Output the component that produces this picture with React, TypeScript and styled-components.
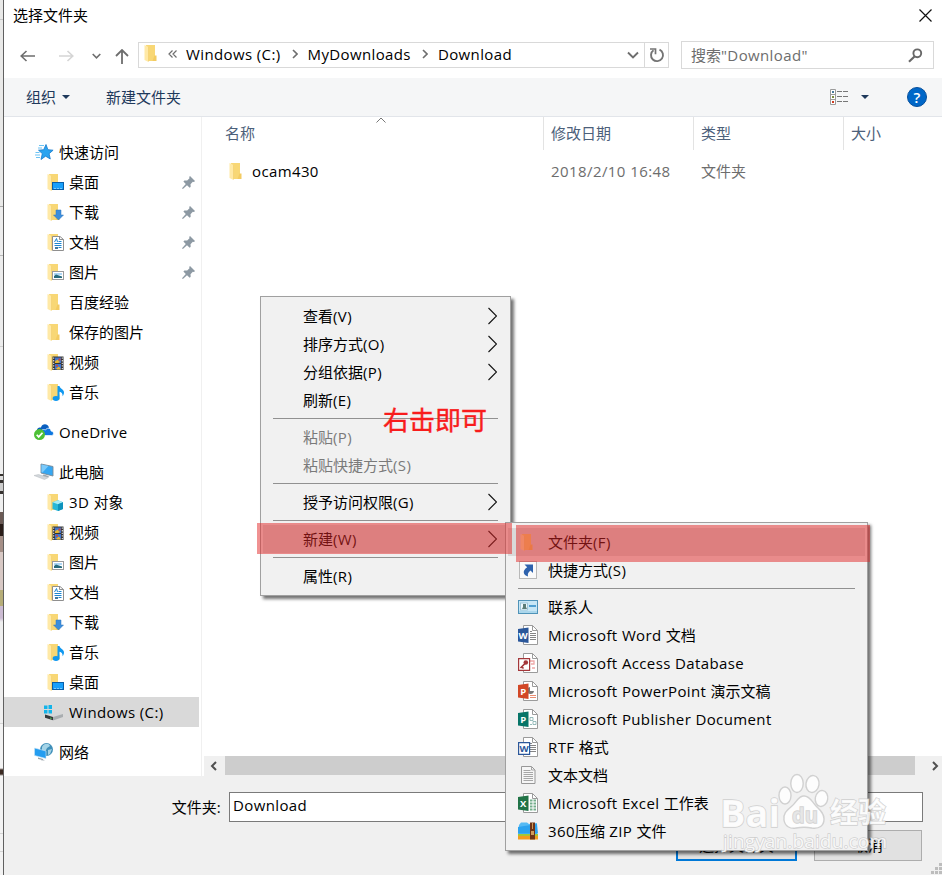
import React from "react";
import styled, { createGlobalStyle, css } from "styled-components";

const Global = createGlobalStyle`
  *, *::before, *::after { box-sizing: border-box; }
  html, body { margin: 0; padding: 0; overflow: hidden; background: #fff; }
  body {
    font-family: "Open Sans", "Noto Sans CJK SC", sans-serif;
    font-size: 15px;
    line-height: 20px;
    color: #000;
  }
  svg { display: block; flex: none; }
`;

const Latin = styled.span<{ $track?: number }>`
  letter-spacing: ${(p) => p.$track ?? 0.38}px;
  white-space: pre;
`;

/* Tracks the western runs of a mixed label, leaving the Chinese at its own pitch. */
const Label = ({ text, track }: { text: string; track?: number }) => (
  <span>
    {text.split(/([\x20-\x7e«]+)/).map((part, i) =>
      i % 2 ? (
        <Latin key={i} $track={track}>
          {part}
        </Latin>
      ) : (
        part
      )
    )}
  </span>
);

/* ---------- Icons ---------- */

const FolderShape = () => (
  <>
    <path d="M3 1h9v16H5z" fill="#f8d775" />
    <path d="M11.500 11.500h2v5.500h-4z" fill="#f3cb62" />
    <path d="M1.500 1l4 2v15l-4-2z" fill="#ffe9a6" />
    <path d="M5.500 3v14.500" stroke="#f0cb6c" strokeWidth=".6" />
  </>
);

type Kind =
  | "folder" | "desktop" | "down" | "doc" | "pic" | "video" | "music" | "cube";

const FilmShape = () => (
  <>
    <path d="M6.500 3.500h11v13.500h-11z" fill="#343436" />
    <path d="M9 4.500h6V10H9zM9 11h6v5.500H9z" fill="#3f74d0" />
    <path d="M9 8.500l2.500-2L14 9l-2 1H9zM10 15.500l3-2 2 3h-4z" fill="#e6b52e" />
    <path d="M12.500 5.500h2v2h-2zM10 12h2v1.500h-2z" fill="#d9462e" />
    <path d="M7.700 4.500V17M16.300 4.500V17" stroke="#e8e8e8" strokeWidth="1.100" strokeDasharray="1.300 1.300" />
  </>
);

const FolderIcon = ({ kind = "folder" }: { kind?: Kind }) => (
  <svg width="19" height="19" viewBox="0 0 19 19">
    <FolderShape />
    {kind === "desktop" && (
      <>
        <rect x="6.500" y="9.500" width="11" height="7" fill="#18a0fb" stroke="#0a5fa8" />
        <path d="M8.500 15.500h8" stroke="#d8f0ff" strokeWidth="1" strokeDasharray="1 2" />
      </>
    )}
    {kind === "down" && <path d="M10 7h5v5h2.500l-5 5-5-5H10z" fill="#3c8ddb" stroke="#2f74bd" strokeWidth=".5" />}
    {kind === "doc" && (
      <>
        <path d="M6.500 3.500h7.500l3.500 3v11h-11z" fill="#fff" stroke="#8f8f8f" />
        <path d="M13.500 3.500v3h4" fill="none" stroke="#8f8f8f" />
        <path d="M8.500 9l2-3.500 1 3.500M12.500 8.500h3M8.500 10.500h7M8.500 12.500h7M12.500 14.500h3" stroke="#1c86d1" fill="none" strokeWidth="1" />
        <path d="M9 14h3v2H9z" fill="#3e78a0" />
      </>
    )}
    {kind === "pic" && (
      <>
        <rect x="6.500" y="8.500" width="11" height="8" fill="#fff" stroke="#9a9a9a" />
        <path d="M8 10h8v2H8z" fill="#aed6f5" />
        <path d="M8 13l2-1.500 6 2V15H8z" fill="#276b7d" />
      </>
    )}
    {kind === "video" && <FilmShape />}
    {kind === "music" && (
      <>
        <ellipse cx="10" cy="15.500" rx="3.300" ry="2.400" fill="#1098f0" />
        <path d="M11.500 3h2c.5 3 4.500 3 4.500 6.500 0 1.500-.6 2.800-1.500 3.800.5-2.500-.9-4-3-4.600v7h-2z" fill="#1098f0" />
      </>
    )}
    {kind === "cube" && (
      <>
        <path d="M6.500 9.200l5.500-2 5 2V16l-5 2-5.500-2z" fill="#28b8d8" />
        <path d="M6.500 9.200l5.500-2 5 2-5 2z" fill="#a8ecf5" />
        <path d="M12 11.200l5-2V16l-5 2z" fill="#0e93bd" />
      </>
    )}
  </svg>
);

const StarIcon = () => (
  <svg width="20" height="19" viewBox="0 0 20 19">
    <path d="M12 1.500l1.900 5.200 5.200.5-4 3.500 1.200 5.300-4.700-2.800L7 16.500l1.300-5.900-3.800-3.400 5.200-.5z" fill="#2aa4f0" stroke="#1679cc" strokeWidth=".8" />
    <path d="M5 2.500h5M4 5h4M1.500 9.500h4M1 12h5M2 14.500h4" stroke="#6cc3f3" />
  </svg>
);

const OneDriveIcon = () => (
  <svg width="20" height="20" viewBox="0 0 20 20">
    <path d="M3 10c-1-4 2.500-5 4-4.500C8 1.500 13.500 1 15 5.500L12 9l-6 4z" fill="#0a5fc0" />
    <path d="M7 13.500c-2-5 2-7 4.500-5.500 1-2.500 5.500-2.500 5.500 1 3.500.5 3 4.500.5 4.500H8z" fill="#0f78e0" stroke="#fff" strokeWidth=".7" />
    <circle cx="5.500" cy="12.600" r="5.500" fill="#4dc035" />
    <path d="M2.700 12.700l2 2.200 3.800-4.200" fill="none" stroke="#fff" strokeWidth="1.700" />
  </svg>
);

const PcIcon = () => (
  <svg width="20" height="20" viewBox="0 0 20 20">
    <path d="M7 2l12 2.500v9.500L7 11z" fill="#36a7f2" stroke="#7a8a96" strokeWidth=".9" />
    <path d="M7.500 2.500l7 1.500-6 6.500-1-.3z" fill="#7ccafa" />
    <path d="M9.500 12.500l6 1.700-3 1.300-4-1.200z" fill="#9ba4ab" />
    <path d="M0 13.500l4.500-1 10 3-4 2z" fill="#d2d6da" stroke="#b4babf" strokeWidth=".5" />
  </svg>
);

const DriveIcon = () => (
  <svg width="20" height="19" viewBox="0 0 20 19">
    <path d="M4 12l8-3.500 8 2.500-9 3.500z" fill="#d5d7d9" />
    <path d="M10 14l10-3v3l-10 3.500z" fill="#a9adb0" />
    <path d="M2 11.500l8 2.500v3.200l-8-2.500z" fill="#363a3c" />
    <path d="M7 15l1.500.5" stroke="#49d04d" />
    <path d="M1 2.500h3.500V6H1zM5.500 2H9v4H5.500zM1 7h3.500v3.500H1zM5.500 7H9v3.500H5.500z" fill="#12b4ea" />
  </svg>
);

const NetIcon = () => (
  <svg width="20" height="20" viewBox="0 0 20 20">
    <circle cx="12.500" cy="7.500" r="6.500" fill="#3f8fb9" />
    <path d="M8 5c2-4 7-4 8-1l-3 2-2 4-3-1zM14 8l4-1-2 5-2 1z" fill="#a4d3e6" />
    <path d="M.5 6l11.500 3v7.500l-11.500-3z" fill="#249df0" stroke="#cfe6f5" strokeWidth=".6" />
    <path d="M4 15.500l5 1.500v1l-5-1zM8 17l3 1.500-4-.3z" fill="#9ba4ab" />
  </svg>
);

const PinIcon = () => (
  <svg width="13" height="13" viewBox="0 0 13 13">
    <path d="M8 0l5 5-1 1-1.200-.2-2.300 2.400.2 2.600-1 1-2.700-2.600L.9 13 0 12.200l3.800-4.300L1.400 5.400l1-1 2.800.2 2.300-2.300L7.200 1z" fill="#8d99a3" />
  </svg>
);

const Stroke = ({ d, w, h, color = "#6e6e6e", width = 1.6 }: { d: string; w: number; h: number; color?: string; width?: number }) => (
  <svg width={w} height={h} viewBox={`0 0 ${w} ${h}`}>
    <path d={d} fill="none" stroke={color} strokeWidth={width} />
  </svg>
);

const SearchIcon = () => (
  <svg width="15" height="15" viewBox="0 0 15 15">
    <circle cx="9.300" cy="5.300" r="3.900" fill="none" stroke="#686868" strokeWidth="1.900" />
    <path d="M6.500 8.500L1 13.700" stroke="#686868" strokeWidth="2.200" />
  </svg>
);

const RefreshIcon = () => (
  <svg width="16" height="16" viewBox="0 0 16 16">
    <path d="M10.500 2.700A6 6 0 1 1 4.500 3.300" fill="none" stroke="#747474" strokeWidth="1.900" />
    <path d="M1 2h5.500v5.300" fill="none" stroke="#747474" strokeWidth="1.700" />
  </svg>
);

const ViewIcon = () => (
  <svg width="19" height="17" viewBox="0 0 19 17">
    <path d="M.5.500h5v15h-5zM.5 5.500h5M.5 10.500h5" fill="#fff" stroke="#9b9b9b" />
    <path d="M2 2h2v2H2z" fill="#487a9a" />
    <path d="M2 7h2v2H2z" fill="#7c8c3c" />
    <path d="M2 12h2v2H2z" fill="#d03a20" />
    <path d="M7 2.500h11M7 7.500h11M7 12.500h11" stroke="#777" strokeDasharray="5 1" />
  </svg>
);

const Triangle = () => (
  <svg width="8" height="4" viewBox="0 0 8 4">
    <path d="M0 0h8L4 4z" fill="#1e395b" />
  </svg>
);

const ShortcutIcon = () => (
  <svg width="20" height="20" viewBox="0 0 20 20">
    <rect x="1.500" y="1.500" width="17" height="17" fill="#fafafa" stroke="#b9b9b9" />
    <path d="M6.500 4.500h8.500V13l-2.500-2.500C10 12.500 9.500 14 10 16.500c-5-1.500-6-6-.8-9.300z" fill="#2e62ad" />
  </svg>
);

const ContactIcon = () => (
  <svg width="20" height="20" viewBox="0 0 20 20">
    <rect x=".5" y="3.500" width="19" height="13" fill="#c7e6f5" stroke="#4f93b8" />
    <rect x="2.500" y="6" width="7" height="7" fill="#edf8fc" stroke="#86b6cb" strokeWidth=".7" />
    <path d="M5 7h3v3l1 2H4l1-2z" fill="#5b7d77" />
    <path d="M11 9h7" stroke="#2787c5" strokeWidth="1.500" />
    <path d="M1 15h18" stroke="#8fc7e2" />
  </svg>
);

const Glyph = styled.text`
  font-family: "Open Sans", sans-serif;
  font-weight: 700;
  font-size: 9.5px;
`;

const OfficeIcon = ({ letter, color, hollow, sheet }: { letter: string; color: string; hollow?: boolean; sheet: "lines" | "access" | "slides" | "pub" | "grid" }) => (
  <svg width="20" height="20" viewBox="0 0 20 20">
    <path d="M5.500.5h9l5 5v14h-14z" fill="#fff" stroke="#9b9b9b" />
    <path d="M14.500.5v5h5" fill="none" stroke="#9b9b9b" />
    {sheet === "lines" && <path d="M12 6.500h2M12 8.500h6M12 10.500h6M12 12.500h6M12 14.500h6" stroke="#777" strokeWidth=".9" />}
    {sheet === "access" && <path d="M12 8h4v3h-3M14 15h3" fill="none" stroke="#efa8a8" strokeWidth="1.300" />}
    {sheet === "slides" && <><path d="M12 6a3.500 3.500 0 1 0 4 4h-4z" fill="#777" /><path d="M12 14.500h6M12 16.500h6" stroke="#e98d72" /></>}
    {sheet === "pub" && <path d="M12 8.500h3v3h-3zM15 12.500h3v3h-3zM12 15.500h2" fill="none" stroke="#7facab" strokeWidth=".8" />}
    {sheet === "grid" && <path d="M12 7.500h6M12 10.500h6M12 13.500h6M12 16.500h6" stroke="#73ad8b" strokeWidth="1.800" strokeDasharray="2.500 1" />}
    <path
      d={hollow ? "M.6 5.600h11v11.800H.6z" : "M0 4L10.500 2.500v15.500L0 16.500z"}
      fill={hollow ? "#fff" : color}
      stroke={hollow ? color : "none"}
      strokeWidth="1.200"
    />
    {letter ? (
      <Glyph x={hollow ? 6.1 : 5.2} y={hollow ? 15 : 13.6} textAnchor="middle" fill={hollow ? color : "#fff"}>
        {letter}
      </Glyph>
    ) : (
      <>
        <path d="M2.500 15l4.500-4.500M4 14l1.500 1.500" stroke={color} strokeWidth="1.700" />
        <circle cx="7.800" cy="9.500" r="2.300" fill={color} />
      </>
    )}
  </svg>
);

const TextIcon = () => (
  <svg width="20" height="20" viewBox="0 0 20 20">
    <path d="M3.500 1.500h10l3.500 3.500v13.500H3.500z" fill="#f6f6f6" stroke="#989898" />
    <path d="M13.500 1.500V5H17M5.500 5.500h7M5.500 7.500h9.500M5.500 9.500h9.500M5.500 11.500h9.500M5.500 13.500h9.500M5.500 15.500h9.500" fill="none" stroke="#a7a7a7" />
  </svg>
);

const ZipIcon = () => (
  <svg width="20" height="20" viewBox="0 0 20 20">
    <path d="M1 4l2-2.500h6L11 3l8-1v11H0z" fill="#55baf4" />
    <path d="M0 6l19-3 1 9.500H0z" fill="#2ba2ef" />
    <path d="M0 13h20v2H0z" fill="#9bcb3b" />
    <path d="M0 14.800h20v3.700H0z" fill="#f39c1e" />
    <path d="M12 1.500h5v17h-5z" fill="#6d3417" />
    <path d="M13 10h3v4h-3zM14 2h1v6h-1z" fill="#d19b59" />
  </svg>
);

/* ---------- Window frame ---------- */

const Screen = styled.div`
  position: relative;
  display: flex;
  width: 942px;
  height: 875px;
  overflow: hidden;
  background: #fff;
`;

const Behind = styled.div`
  flex: none;
  width: 4px;
  border-right: 1px solid #606060;
  background: linear-gradient(
    #e9e9e8 0 19px, #c9c9c9 19px 20px, #e9e9e8 20px 206px, #a9a9a9 206px 207px,
    #ededed 207px 255px, #b9b9b9 255px 256px, #ececec 256px 346px, #cfcfcf 346px 347px,
    #efefef 347px 474px, #36322f 474px 476px, #ddd 476px 480px, #36322f 480px 483px,
    #ccc 483px 491px, #36322f 491px 494px, #efefef 494px 512px, #6b5a55 512px 524px,
    #2a1c18 524px 536px, #a58f87 536px 552px, #d8c9c5 552px 590px, #b6ad78 590px 606px,
    #cbbbd2 606px 618px, #efefef 622px 723px, #d4d4d4 723px 724px, #f3f3f3 724px 768px,
    #3b2a22 770px 774px, #f3f3f3 776px 833px, #d4d4d4 833px 834px, #f3f3f3 834px 851px,
    #d4d4d4 851px 852px, #f3f3f3 852px
  );
`;

const Dialog = styled.main`
  display: flex;
  flex-direction: column;
  flex: 1;
  min-width: 0;
`;

const TitleBar = styled.header`
  display: flex;
  align-items: center;
  justify-content: space-between;
  height: 32px;
  padding: 0 10px 2px 9px;
`;

const NavRow = styled.div`
  display: flex;
  align-items: center;
  height: 46px;
  padding: 0 8px 0 16px;
`;

const NavIcons = styled.div`
  display: flex;
  align-items: center;
  width: 118px;
  padding-top: 2px;
`;

const NavSlot = styled.div<{ $w: number }>`
  width: ${(p) => p.$w}px;
`;

const AddressBox = styled.div`
  display: flex;
  align-items: center;
  width: 531px;
  height: 26px;
  border: 1px solid #d9d9d9;
  padding-left: 4px;
`;

const AddressFolder = styled.div`
  padding-bottom: 3px;
`;

const Crumb = styled.span<{ $gap: number }>`
  display: flex;
  align-items: center;
  margin-left: ${(p) => p.$gap}px;
  height: 24px;
  padding-bottom: 2px;
`;

const AddressEnd = styled.div`
  display: flex;
  align-items: center;
  gap: 5px;
  margin-left: auto;
  height: 24px;
`;

const RefreshCell = styled.div`
  display: flex;
  align-items: center;
  justify-content: center;
  width: 24px;
  height: 24px;
  border-left: 1px solid #d9d9d9;
`;

const SearchBox = styled.div`
  display: flex;
  align-items: center;
  justify-content: space-between;
  width: 253px;
  height: 28px;
  margin-left: 12px;
  padding: 0 10px 0 9px;
  border: 1px solid #d9d9d9;
  color: #6d6d6d;
`;

const Toolbar = styled.div`
  display: flex;
  align-items: center;
  height: 39px;
  padding: 0 15px 0 22px;
  background: #f5f6f7;
  border-bottom: 1px solid #e2e5ea;
  color: #1e395b;
`;

const ToolButton = styled.div<{ $ml?: number }>`
  display: flex;
  align-items: center;
  gap: 6px;
  margin-left: ${(p) => p.$ml ?? 0}px;
`;

const HelpBadge = styled.div`
  display: grid;
  place-items: center;
  width: 20px;
  height: 20px;
  margin-left: 38px;
  border-radius: 50%;
  border: 1px solid #064f9c;
  background: #0067c8;
  color: #fff;
  font-size: 15px;
  font-weight: 600;
  line-height: 18px;
`;

const Body = styled.div`
  display: flex;
  height: 659px;
`;

const Sidebar = styled.nav`
  width: 198px;
  flex: none;
  padding-top: 20px;
  border-right: 1px solid #f0f0f0;
`;

const Group = styled.div`
  margin-bottom: 10px;
`;

const SideRow = styled.div<{ $level: number; $selected?: boolean }>`
  display: flex;
  align-items: center;
  width: 195px;
  height: 30px;
  padding-left: ${(p) => (p.$level ? 42 : 30)}px;
  padding-right: 4px;
  ${(p) => p.$selected && css`
    background: #d9d9d9;
    padding-left: 39px;
  `}
`;

const SideText = styled.span<{ $level: number; $wide?: boolean }>`
  margin-left: ${(p) => (p.$wide ? 6 : p.$level ? 4 : 5)}px;
  flex: 1;
`;

const FilePane = styled.section`
  display: flex;
  flex-direction: column;
  flex: 1;
  padding-left: 2px;
`;

const FileHead = styled.div`
  position: relative;
  display: grid;
  grid-template-columns: 340px 150px 150px 1fr;
  height: 33px;
  color: #4c607a;
`;

const HeadCell = styled.div<{ $first?: boolean; $last?: boolean }>`
  padding: ${(p) => (p.$first ? "6px 0 0 21px" : "6px 0 0 7px")};
  border-right: ${(p) => (p.$last ? "0" : "1px solid #e3e3e3")};
`;

const SortMark = styled.div`
  position: absolute;
  left: 172px;
  top: 0;
`;

const FileRow = styled.div`
  display: grid;
  grid-template-columns: 340px 150px 150px 1fr;
  height: 30px;
  margin-top: 6px;
  align-items: center;
  color: #6d6d6d;
`;

const FileName = styled.div`
  display: flex;
  align-items: center;
  gap: 5px;
  padding-left: 24px;
  color: #000;
`;

const FileCell = styled.div`
  padding-left: 7px;
`;

const ScrollBar = styled.div`
  display: flex;
  align-items: center;
  height: 20px;
  margin-top: auto;
  background: #f0f0f0;
  padding: 0 3px 1px 6px;
`;

const Thumb = styled.div`
  width: 690px;
  height: 19px;
  margin-left: 8px;
  margin-right: auto;
  background: #cdcdcd;
`;

const Footer = styled.footer`
  position: relative;
  flex: 1;
  background: #f0f0f0;
  padding: 16px 19px 0 0;
`;

const NameRow = styled.div`
  display: flex;
  align-items: center;
  justify-content: flex-end;
  gap: 8px;
`;

const NameInput = styled.div`
  width: 694px;
  height: 30px;
  padding: 2px 3px;
  border: 1px solid #7a7a7a;
  background: #fff;
`;

const ButtonRow = styled.div`
  display: flex;
  justify-content: flex-end;
  gap: 17px;
  margin: 8px 1px 0 0;
`;

const PushButton = styled.div<{ $primary?: boolean }>`
  display: grid;
  place-items: center;
  width: ${(p) => (p.$primary ? 121 : 108)}px;
  height: 31px;
  padding-bottom: 2px;
  border: ${(p) => (p.$primary ? "2px solid #0078d7" : "1px solid #adadad")};
  background: #e1e1e1;
`;

const Grip = styled.div`
  position: absolute;
  right: 0;
  bottom: 0;
`;

/* ---------- Menus ---------- */

const Menu = styled.div<{ $x: number; $y: number; $w: number }>`
  position: absolute;
  left: ${(p) => p.$x}px;
  top: ${(p) => p.$y}px;
  width: ${(p) => p.$w}px;
  padding: 5px 2px;
  background: #f1f1f1;
  border: 1px solid #a0a0a0;
  box-shadow: 3px 3px 3px rgba(0, 0, 0, 0.55);
`;

const MenuRow = styled.div<{ $hot?: boolean; $off?: boolean; $icons?: boolean }>`
  display: flex;
  align-items: center;
  height: 28px;
  padding-right: 11px;
  padding-left: ${(p) => (p.$icons ? 10 : 40)}px;
  gap: 10px;
  color: ${(p) => (p.$off ? "#7a7a7a" : "#000")};
  background: ${(p) => (p.$hot ? "#d9d9d9" : "transparent")};
`;

const SubArrow = styled.div`
  margin-left: auto;
  padding-bottom: 1px;
`;

const MenuIcon = styled.div`
  display: grid;
  place-items: center;
  width: 20px;
  height: 20px;
`;

const Rule = styled.div`
  height: 1px;
  margin: 4px 10px;
  background: #919191;
`;

const Marker = styled.div<{ $x: number; $y: number; $w: number; $h: number }>`
  position: absolute;
  left: ${(p) => p.$x}px;
  top: ${(p) => p.$y}px;
  width: ${(p) => p.$w}px;
  height: ${(p) => p.$h}px;
  background: rgba(226, 38, 38, 0.5);
`;

const Note = styled.div`
  position: absolute;
  left: 383px;
  top: 401px;
  font-family: "Noto Sans CJK SC", sans-serif;
  font-size: 26px;
  font-weight: 400;
  line-height: 36px;
  color: #f81c1c;
  -webkit-text-stroke: 0.4px #f81c1c;
`;

const Watermark = styled.div`
  position: absolute;
  left: 718px;
  top: 770px;
`;

const MarkText = styled.text<{ $size: number; $weight?: number }>`
  font-family: "Open Sans", "Noto Sans CJK SC", sans-serif;
  font-size: ${(p) => p.$size}px;
  font-weight: ${(p) => p.$weight ?? 400};
  paint-order: stroke;
`;

const BaiduMark = () => (
  <Watermark>
    <svg width="180" height="90" viewBox="0 0 180 90" fill="#fff" fillOpacity=".85" stroke="#c4c4c4" strokeOpacity=".75" strokeWidth="1.400">
      <MarkText x="2" y="56.500" $size={38} $weight={700} textLength="60" lengthAdjust="spacingAndGlyphs">Bai</MarkText>
      <ellipse cx="67" cy="25.500" rx="6" ry="8.500" />
      <ellipse cx="79" cy="13.500" rx="6.200" ry="9" />
      <ellipse cx="94.500" cy="14" rx="6.500" ry="8.500" transform="rotate(8 94.500 14)" />
      <ellipse cx="103.500" cy="28.500" rx="6.200" ry="8" transform="rotate(10 103.500 28.500)" />
      <path d="M86 26c-6 0-7 6-12 10-6 5-9 8-8 14 1 7 7 9 12 8 5-1 11-1 16 0 7 1 12-2 12-9 0-6-4-9-8-13-4-4-6-10-12-10z" />
      <MarkText x="74" y="53" $size={21} $weight={700} textLength="26" lengthAdjust="spacingAndGlyphs" fill="#e4e4e4">du</MarkText>
      <MarkText x="112" y="53" $size={28} $weight={700}>经验</MarkText>
      <MarkText x="5" y="77.500" $size={19} textLength="164">jingyan.baidu.com</MarkText>
    </svg>
  </Watermark>
);

/* ---------- Data ---------- */

type SideItem = { text: string; kind?: Kind; pinned?: boolean };

const quick: SideItem[] = [
  { text: "桌面", kind: "desktop", pinned: true },
  { text: "下载", kind: "down", pinned: true },
  { text: "文档", kind: "doc", pinned: true },
  { text: "图片", kind: "pic", pinned: true },
  { text: "百度经验", kind: "folder" },
  { text: "保存的图片", kind: "folder" },
  { text: "视频", kind: "video" },
  { text: "音乐", kind: "music" },
];

const computer: SideItem[] = [
  { text: "3D 对象", kind: "cube" },
  { text: "视频", kind: "video" },
  { text: "图片", kind: "pic" },
  { text: "文档", kind: "doc" },
  { text: "下载", kind: "down" },
  { text: "音乐", kind: "music" },
  { text: "桌面", kind: "desktop" },
];

type MenuItem = { text: string; sub?: boolean; off?: boolean; hot?: boolean; icon?: React.ReactNode } | null;

const contextItems: MenuItem[] = [
  { text: "查看(V)", sub: true },
  { text: "排序方式(O)", sub: true },
  { text: "分组依据(P)", sub: true },
  { text: "刷新(E)" },
  null,
  { text: "粘贴(P)", off: true },
  { text: "粘贴快捷方式(S)", off: true },
  null,
  { text: "授予访问权限(G)", sub: true },
  null,
  { text: "新建(W)", sub: true, hot: true },
  null,
  { text: "属性(R)" },
];

const newItems: MenuItem[] = [
  { text: "文件夹(F)", hot: true, icon: <FolderIcon /> },
  { text: "快捷方式(S)", icon: <ShortcutIcon /> },
  null,
  { text: "联系人", icon: <ContactIcon /> },
  { text: "Microsoft Word 文档", icon: <OfficeIcon letter="W" color="#2b579a" sheet="lines" /> },
  { text: "Microsoft Access Database", icon: <OfficeIcon letter="" color="#a4373a" hollow sheet="access" /> },
  { text: "Microsoft PowerPoint 演示文稿", icon: <OfficeIcon letter="P" color="#d24726" sheet="slides" /> },
  { text: "Microsoft Publisher Document", icon: <OfficeIcon letter="P" color="#077568" sheet="pub" /> },
  { text: "RTF 格式", icon: <OfficeIcon letter="W" color="#2b579a" hollow sheet="lines" /> },
  { text: "文本文档", icon: <TextIcon /> },
  { text: "Microsoft Excel 工作表", icon: <OfficeIcon letter="X" color="#217346" sheet="grid" /> },
  { text: "360压缩 ZIP 文件", icon: <ZipIcon /> },
];

const MenuRows = ({ items, icons }: { items: MenuItem[]; icons?: boolean }) => (
  <>
    {items.map((item, i) =>
      item ? (
        <MenuRow key={i} $hot={item.hot} $off={item.off} $icons={icons}>
          {item.icon && <MenuIcon>{item.icon}</MenuIcon>}
          <Label text={item.text} />
          {item.sub && (
            <SubArrow>
              <Stroke w={9} h={18} d="M.5 1l8 8-8 8" color="#111" width={1.1} />
            </SubArrow>
          )}
        </MenuRow>
      ) : (
        <Rule key={i} />
      )
    )}
  </>
);

const SideItems = ({ items }: { items: SideItem[] }) => (
  <>
    {items.map((item) => (
      <SideRow key={item.text} $level={1}>
        <FolderIcon kind={item.kind} />
        <SideText $level={1}><Label text={item.text} /></SideText>
        {item.pinned && <PinIcon />}
      </SideRow>
    ))}
  </>
);

export default function App() {
  return (
    <>
      <Global />
      <Screen>
        <Behind />
        <Dialog>
          <TitleBar>
            选择文件夹
            <Stroke w={13} h={13} d="M.5.5l12 12M12.500.5l-12 12" color="#111" width={1.2} />
          </TitleBar>
          <NavRow>
            <NavIcons>
              <NavSlot $w={39}><Stroke w={15} h={12} d="M1 6h14M6.500 1L1.200 6l5.300 5" /></NavSlot>
              <NavSlot $w={33}><Stroke w={15} h={12} d="M0 6h14M8.500 1l5.300 5-5.300 5" color="#d5d5d5" /></NavSlot>
              <NavSlot $w={23}><Stroke w={9} h={6} d="M.7 1l3.800 3.800L8.300 1" /></NavSlot>
              <Stroke w={14} h={15} d="M7 15V1M1 7l6-6 6 6" width={1.8} />
            </NavIcons>
            <AddressBox>
              <AddressFolder><FolderIcon /></AddressFolder>
              <Crumb $gap={6}><Stroke w={9} h={8} d="M4.500.5L1 4l3.500 3.500M8.500.5L5 4l3.500 3.500" width={1.2} /></Crumb>
              <Crumb $gap={9}><Label text="Windows (C:)" /></Crumb>
              <Crumb $gap={11}><Stroke w={6} h={10} d="M1 1l4 4-4 4" /></Crumb>
              <Crumb $gap={10}><Label text="MyDownloads" /></Crumb>
              <Crumb $gap={11}><Stroke w={6} h={10} d="M1 1l4 4-4 4" /></Crumb>
              <Crumb $gap={10}><Label text="Download" /></Crumb>
              <AddressEnd>
                <Stroke w={12} h={8} d="M1 1.500l5 5 5-5" width={1.9} />
                <RefreshCell><RefreshIcon /></RefreshCell>
              </AddressEnd>
            </AddressBox>
            <SearchBox>
              <Label text={'搜索"Download"'} />
              <SearchIcon />
            </SearchBox>
          </NavRow>
          <Toolbar>
            <ToolButton>组织<Triangle /></ToolButton>
            <ToolButton $ml={36}>新建文件夹</ToolButton>
            <ToolButton $ml={649}><ViewIcon /></ToolButton>
            <ToolButton $ml={12}><Triangle /></ToolButton>
            <HelpBadge>?</HelpBadge>
          </Toolbar>
          <Body>
            <Sidebar>
              <Group>
                <SideRow $level={0}><StarIcon /><SideText $level={0}>快速访问</SideText></SideRow>
                <SideItems items={quick} />
              </Group>
              <Group>
                <SideRow $level={0}><OneDriveIcon /><SideText $level={0}><Label text="OneDrive" track={0.3} /></SideText></SideRow>
              </Group>
              <Group>
                <SideRow $level={0}><PcIcon /><SideText $level={0}>此电脑</SideText></SideRow>
                <SideItems items={computer} />
                <SideRow $level={1} $selected>
                  <DriveIcon />
                  <SideText $level={1} $wide><Label text="Windows (C:)" /></SideText>
                </SideRow>
              </Group>
              <SideRow $level={0}><NetIcon /><SideText $level={0}>网络</SideText></SideRow>
            </Sidebar>
            <FilePane>
              <FileHead>
                <HeadCell $first>名称</HeadCell>
                <HeadCell>修改日期</HeadCell>
                <HeadCell>类型</HeadCell>
                <HeadCell $last>大小</HeadCell>
                <SortMark><Stroke w={10} h={6} d="M.5 5.500L5 1l4.500 4.500" color="#777" width={1} /></SortMark>
              </FileHead>
              <FileRow>
                <FileName><FolderIcon /><Label text="ocam430" /></FileName>
                <FileCell><Label text="2018/2/10 16:48" track={0.42} /></FileCell>
                <FileCell>文件夹</FileCell>
              </FileRow>
              <ScrollBar>
                <Stroke w={7} h={10} d="M6 1L2 5l4 4" color="#505050" width={2} />
                <Thumb />
                <Stroke w={7} h={10} d="M1 1l4 4-4 4" color="#505050" width={2} />
              </ScrollBar>
            </FilePane>
          </Body>
          <Footer>
            <NameRow>
              <Label text="文件夹:" />
              <NameInput><Label text="Download" /></NameInput>
            </NameRow>
            <ButtonRow>
              <PushButton $primary>选择文件夹</PushButton>
              <PushButton>取消</PushButton>
            </ButtonRow>
            <Grip>
              <svg width="11" height="12" viewBox="0 0 11 12">
                <path d="M8 0h3v3H8zM4 4h3v3H4zM8 4h3v3H8zM0 8h3v3H0zM4 8h3v3H4zM8 8h3v3H8z" fill="#bdbdbd" />
              </svg>
            </Grip>
          </Footer>
        </Dialog>
        <Menu $x={260} $y={296} $w={251}><MenuRows items={contextItems} /></Menu>
        <Menu $x={505} $y={522} $w={363}><MenuRows items={newItems} icons /></Menu>
        <Note>右击即可</Note>
        <Marker $x={257} $y={523} $w={255} $h={31} />
        <Marker $x={516} $y={525} $w={354} $h={37} />
        <BaiduMark />
      </Screen>
    </>
  );
}
